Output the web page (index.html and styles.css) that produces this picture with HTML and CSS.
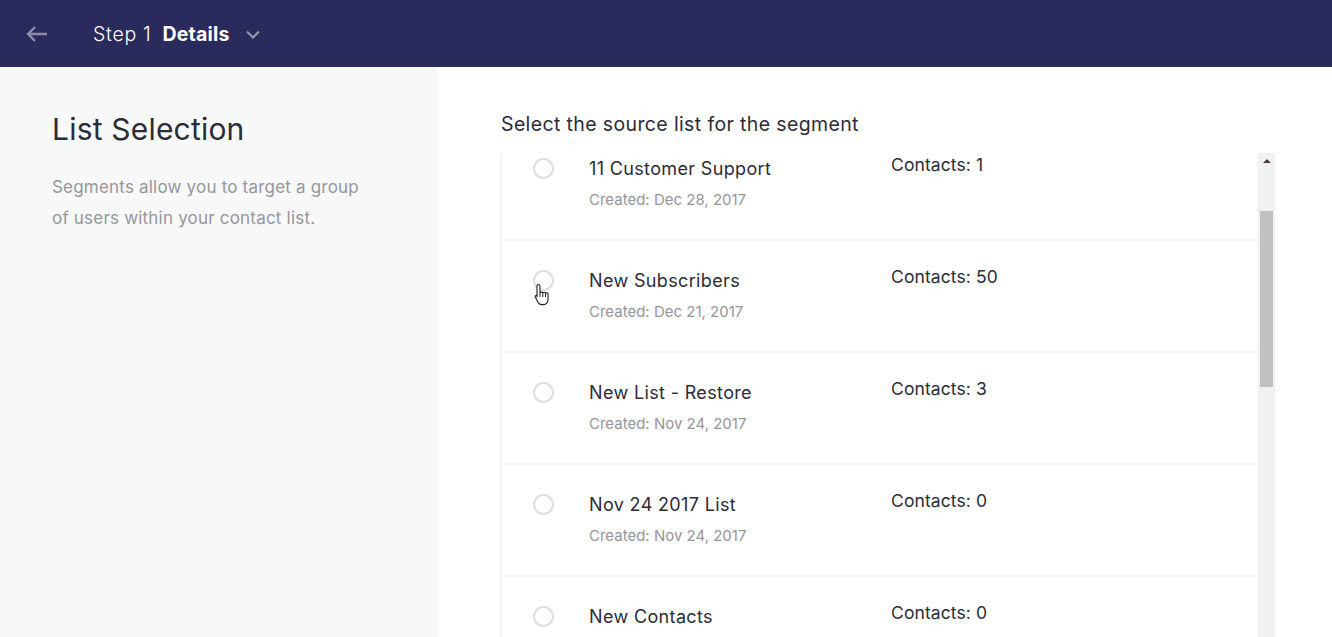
FILE: index.html
```html
<!DOCTYPE html>
<html>
<head>
<meta charset="utf-8">
<link rel="stylesheet" href="styles.css">
</head>
<body>
<header class="topbar">
  <svg class="back" width="22" height="16" viewBox="0 0 22 16"><path d="M21 8H2M9 1L2 8l7 7" fill="none" stroke="#8d8caa" stroke-width="2.4"/></svg>
  <span class="step">Step 1</span>
  <span class="step-name">Details</span>
  <svg class="chev" width="14" height="9" viewBox="0 0 14 9"><path d="M1 1.5l6 6 6-6" fill="none" stroke="#9897b4" stroke-width="2"/></svg>
</header>
<main class="layout">
  <aside class="side">
    <h1 class="side-title">List Selection</h1>
    <p class="side-text">Segments allow you to target a group of users within your contact list.</p>
  </aside>
  <section class="content">
    <h2 class="content-title">Select the source list for the segment</h2>
    <div class="list-wrap">
      <div class="list" id="list">
        <div class="row"><span class="radio"></span><div class="info"><div class="name">11 Customer Support</div><div class="date">Created: Dec 28, 2017</div></div><div class="count">Contacts: 1</div></div>
        <div class="row"><span class="radio hover"></span><div class="info"><div class="name">New Subscribers</div><div class="date">Created: Dec 21, 2017</div></div><div class="count">Contacts: 50</div></div>
        <div class="row"><span class="radio"></span><div class="info"><div class="name">New List - Restore</div><div class="date">Created: Nov 24, 2017</div></div><div class="count">Contacts: 3</div></div>
        <div class="row"><span class="radio"></span><div class="info"><div class="name">Nov 24 2017 List</div><div class="date">Created: Nov 24, 2017</div></div><div class="count">Contacts: 0</div></div>
        <div class="row"><span class="radio"></span><div class="info"><div class="name">New Contacts</div></div><div class="count">Contacts: 0</div></div>
      </div>
      <div class="scrollbar">
        <div class="sb-button"><span class="sb-arrow"></span></div>
        <div class="sb-thumb"></div>
      </div>
      <svg class="cursor" width="16" height="23" viewBox="0 0 16 23"><path d="M4.5 1.5c.8 0 1.5.7 1.5 1.5v6.5c.3-.6 2.5-.6 2.8.3.3-.7 2.4-.7 2.7.3.4-.6 2.5-.4 2.5 1v5.5c0 2.5-1.8 5-4.5 5H7.5c-1.6 0-2.6-.9-3.4-2L1.3 14c-.6-1 .8-2.3 1.8-1.3L3 14V3c0-.8.7-1.5 1.5-1.5z" fill="#fff" stroke="#222" stroke-width="1.1" stroke-linejoin="round"/><path d="M6 9.5V14M8.8 9.8V14M11.5 10.5V14" stroke="#222" stroke-width="1"/></svg>
    </div>
  </section>
</main>
<script src="script.js"></script>
</body>
</html>
```

FILE: styles.css
```css
* { box-sizing: border-box; }
html, body { margin: 0; padding: 0; height: 100%; overflow: hidden; }
body {
  font-family: Inter, "Noto Sans", "Liberation Sans", sans-serif;
  color: #2d2d3a;
  background: #fff;
}
.topbar {
  height: 67px;
  background: #2b2a5d;
  display: flex;
  align-items: center;
  padding-left: 26px;
}
.back { margin-right: 45px; margin-top: 1px; }
.step {
  color: #fff;
  font-size: 19.5px;
  font-weight: 300;
  letter-spacing: 0.7px;
}
.step-name {
  color: #fff;
  font-size: 19.5px;
  font-weight: 700;
  margin-left: 11px;
  letter-spacing: 0.2px;
}
.chev { margin-left: 16px; margin-top: 2px; }
.layout {
  display: flex;
  height: 570px;
}
.side {
  width: 438px;
  flex: none;
  background: #f7f8f8;
  padding: 43px 0 0 52px;
}
.side-title {
  margin: 0;
  font-size: 30px;
  font-weight: 400;
  color: #2c2c38;
  letter-spacing: 0.2px;
  line-height: 38px;
}
.side-text {
  margin: 24px 0 0;
  width: 320px;
  font-size: 17px;
  line-height: 31px;
  color: #96969c;
  letter-spacing: 0.2px;
}
.content {
  flex: 1;
  padding: 44px 0 0 62px;
}
.content-title {
  margin: 0 0 0 1px;
  font-size: 19.5px;
  font-weight: 400;
  line-height: 27px;
  color: #2c2c38;
  letter-spacing: 0.37px;
}
.list-wrap {
  position: relative;
  margin-top: 15px;
  width: 775px;
  display: flex;
}
.list {
  flex: 1;
  height: 484px;
  overflow: hidden;
  border-left: 2px solid #f4f4f4;
}
.scrollbar {
  width: 17px;
  flex: none;
  height: 484px;
  background: #f1f1f1;
  display: flex;
  flex-direction: column;
  align-items: center;
}
.sb-button {
  height: 17px;
  width: 17px;
  display: flex;
  justify-content: center;
  padding-top: 6px;
}
.sb-arrow {
  width: 0;
  height: 0;
  border-left: 4px solid transparent;
  border-right: 4px solid transparent;
  border-bottom: 4px solid #4a3a42;
}
.sb-thumb {
  margin-top: 41px;
  width: 13px;
  height: 176px;
  background: #c1c1c1;
}
.row {
  height: 112px;
  border-bottom: 2px solid #f5f5f5;
  display: flex;
  align-items: flex-start;
  padding-top: 27px;
  flex: none;
}
.radio {
  width: 21px;
  height: 21px;
  border-radius: 50%;
  border: 2px solid #dcdce1;
  margin: 2px 0 0 31px;
  flex: none;
}
.info {
  margin-left: 35px;
  width: 302px;
  flex: none;
}
.name {
  font-size: 18px;
  line-height: 26px;
  color: #2c2c38;
  letter-spacing: 0.35px;
}
.date {
  margin-top: 8px;
  font-size: 15px;
  line-height: 20px;
  color: #96969c;
  letter-spacing: 0px;
}
.count {
  font-size: 17.5px;
  line-height: 22px;
  margin-top: -2px;
  color: #2c2c38;
  letter-spacing: 0.1px;
}
.cursor {
  position: absolute;
  left: 34px;
  top: 130px;
}
```

FILE: script.js
```js
document.getElementById('list').scrollTop = 24;
```
